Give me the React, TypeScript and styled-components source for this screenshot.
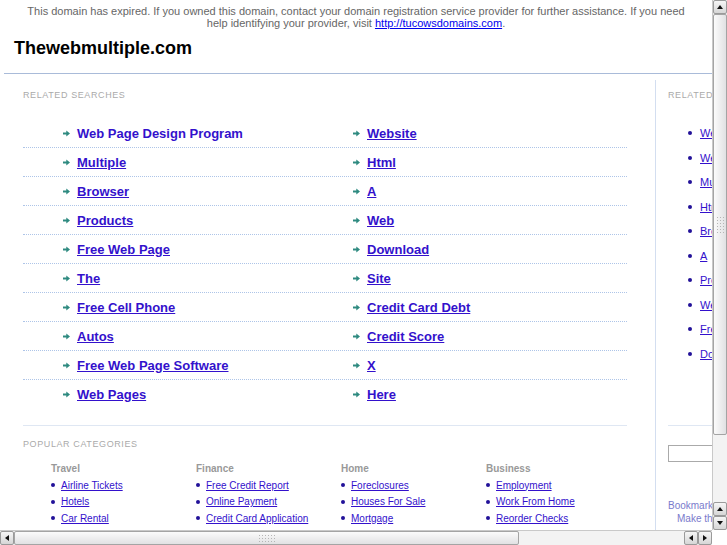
import * as React from "react";
import styled, { createGlobalStyle } from "styled-components";

const GlobalStyle = createGlobalStyle`
  html, body {
    margin: 0;
    padding: 0;
    background: #fff;
    overflow: hidden;
  }
  body {
    font-family: "Liberation Sans", Arial, Helvetica, sans-serif;
  }
`;

const searchRows: [string, string][] = [
  ["Web Page Design Program", "Website"],
  ["Multiple", "Html"],
  ["Browser", "A"],
  ["Products", "Web"],
  ["Free Web Page", "Download"],
  ["The", "Site"],
  ["Free Cell Phone", "Credit Card Debt"],
  ["Autos", "Credit Score"],
  ["Free Web Page Software", "X"],
  ["Web Pages", "Here"],
];

const categories = [
  { name: "Travel", links: ["Airline Tickets", "Hotels", "Car Rental"] },
  {
    name: "Finance",
    links: ["Free Credit Report", "Online Payment", "Credit Card Application"],
  },
  { name: "Home", links: ["Foreclosures", "Houses For Sale", "Mortgage"] },
  {
    name: "Business",
    links: ["Employment", "Work From Home", "Reorder Checks"],
  },
];

const sideLinks = searchRows.slice(0, 5).flatMap((r) => r);

const Frame = styled.div`
  width: 727px;
  height: 545px;
  display: grid;
  grid-template-columns: 712px 15px;
  grid-template-rows: 530px 15px;
  overflow: hidden;
`;

const Viewport = styled.div`
  overflow: hidden;
  background: #fff;
`;

const Page = styled.div`
  width: 945px;
`;

const Notice = styled.div`
  width: 712px;
  box-sizing: border-box;
  padding: 5px 10px 0;
  text-align: center;
  font-size: 11px;
  line-height: 12px;
  color: #666;

  a {
    color: #0000ee;
  }
`;

const Title = styled.h1`
  margin: 8px 0 0 14px;
  font-size: 18px;
  line-height: 22px;
  font-weight: bold;
  color: #000;
`;

const Rule = styled.hr`
  margin: 14px 0 0 4px;
  border: 0;
  border-top: 1px solid #a9bbd9;
`;

const Body = styled.div`
  display: flex;
  margin-top: 6px;
  min-height: 470px;
`;

const Main = styled.div`
  width: 651px;
  margin-left: 4px;
  box-sizing: border-box;
  padding: 10px 28px 0 19px;
`;

const Sidebar = styled.div`
  flex: 1;
  border-left: 1px solid #d3def0;
  padding: 10px 20px 0 12px;
`;

const Label = styled.div`
  font-size: 9px;
  line-height: 11px;
  letter-spacing: 0.6px;
  color: #aaa;
  text-transform: uppercase;
`;

const SearchList = styled.div`
  margin-top: 18px;
`;

const SearchRow = styled.div`
  display: grid;
  grid-template-columns: 290px 1fr;
  height: 28px;
  align-items: center;
  border-bottom: 1px dotted #aec5e8;

  &:last-child {
    border-bottom: none;
  }
`;

const SearchCell = styled.div`
  display: flex;
  align-items: center;
  gap: 7px;
  padding-left: 40px;
`;

const SearchLink = styled.a<{ $plain?: boolean }>`
  font-size: 13px;
  font-weight: bold;
  color: #3311cc;
  text-decoration: ${(p) => (p.$plain ? "none" : "underline")};
`;

const Divider = styled.div`
  margin-top: 17px;
  border-top: 1px solid #dfe7f3;
`;

const PopularLabel = styled(Label)`
  margin-top: 13px;
`;

const CategoryGrid = styled.div`
  display: grid;
  grid-template-columns: repeat(4, 145px);
  padding-left: 28px;
  margin-top: 13px;
`;

const CatHeading = styled.div`
  font-size: 10px;
  line-height: 12px;
  font-weight: bold;
  color: #999;
  margin-bottom: 2px;
`;

const CatItem = styled.div`
  display: flex;
  align-items: center;
  gap: 6px;
  height: 16.5px;
`;

const Bullet = styled.span`
  width: 4px;
  height: 4px;
  border-radius: 50%;
  background: #221199;
  flex: none;
`;

const SmallLink = styled.a`
  font-size: 10px;
  color: #3311cc;
  text-decoration: underline;
  white-space: nowrap;
`;

const SideList = styled.div`
  margin-top: 20px;
  padding-left: 20px;
`;

const SideItem = styled.div`
  display: flex;
  align-items: center;
  gap: 8px;
  height: 24.5px;
`;

const SideLink = styled(SmallLink)`
  font-size: 11px;
`;

const SideRule = styled.div`
  margin-top: 59px;
  border-top: 1px solid #dfe7f3;
`;

const SearchBox = styled.input`
  display: block;
  margin-top: 19px;
  width: 180px;
  height: 17px;
  box-sizing: border-box;
  border: 1px solid #aaa;
  padding: 0 3px;
`;

const SideNote = styled.div<{ $indent?: number }>`
  font-size: 10px;
  line-height: 13px;
  color: #7a7acc;
  padding-left: ${(p) => p.$indent ?? 0}px;
`;

const NoteBlock = styled.div`
  margin-top: 37px;
`;

/* fake GTK scrollbars */

const VScroll = styled.div`
  display: flex;
  flex-direction: column;
  background: #efefef;
  border-left: 1px solid #c9c9c9;
  box-sizing: border-box;
`;

const HScroll = styled.div`
  display: flex;
  background: #efefef;
  border-top: 1px solid #c9c9c9;
  box-sizing: border-box;
`;

const Corner = styled.div`
  background: #fff;
`;

type Dir = "up" | "down" | "left" | "right";

const ScrollButton = styled.div<{ $dir: Dir }>`
  flex: 0 0 14px;
  width: 14px;
  height: 14px;
  box-sizing: border-box;
  border: 1px solid #9a9a9a;
  border-radius: 2px;
  background: linear-gradient(#f6f6f6, #d6d6d6);
  display: flex;
  align-items: center;
  justify-content: center;

  &::after {
    content: "";
    width: 0;
    height: 0;
    border: 3px solid transparent;
    ${(p) =>
      p.$dir === "up"
        ? "border-bottom: 4px solid #111; border-top-width: 0;"
        : p.$dir === "down"
        ? "border-top: 4px solid #111; border-bottom-width: 0;"
        : p.$dir === "left"
        ? "border-right: 4px solid #111; border-left-width: 0;"
        : "border-left: 4px solid #111; border-right-width: 0;"}
  }
`;

const Thumb = styled.div<{ $size: number; $vertical?: boolean }>`
  flex: 0 0 ${(p) => p.$size}px;
  box-sizing: border-box;
  border: 1px solid #a4a4a4;
  border-radius: 2px;
  background: ${(p) =>
    p.$vertical
      ? "linear-gradient(to right, #fbfbfb, #e1e1e3)"
      : "linear-gradient(#fbfbfb, #e1e1e3)"};
  display: flex;
  align-items: center;
  justify-content: center;
`;

const Grip = styled.div<{ $vertical?: boolean }>`
  width: ${(p) => (p.$vertical ? 9 : 18)}px;
  height: ${(p) => (p.$vertical ? 18 : 9)}px;
  background-image: radial-gradient(#b5b5b5 0.8px, transparent 1px);
  background-size: 3px 3px;
`;

const Trough = styled.div`
  flex: 1;
  background-color: #f3f3f3;
  background-image: radial-gradient(#dcdcdc 0.5px, transparent 0.7px);
  background-size: 2px 2px;
`;

const Arrow = () => (
  <svg width="7" height="7" viewBox="0 0 7 7">
    <path d="M0 2.5h3.3V0.5L7 3.5 3.3 6.5V4.5H0z" fill="#2e8a80" />
  </svg>
);

const App = () => {
  return (
    <Frame>
      <GlobalStyle />
      <Viewport>
        <Page>
          <Notice>
            This domain has expired. If you owned this domain, contact your
            domain registration service provider for further assistance. If you
            need
            <br />
            help identifying your provider, visit{" "}
            <a href="#">http://tucowsdomains.com</a>.
          </Notice>
          <Title>Thewebmultiple.com</Title>
          <Rule />
          <Body>
            <Main>
              <Label>Related Searches</Label>
              <SearchList>
                {searchRows.map(([a, b], i) => (
                  <SearchRow key={a}>
                    <SearchCell>
                      <Arrow />
                      <SearchLink href="#" $plain={i === 0}>
                        {a}
                      </SearchLink>
                    </SearchCell>
                    <SearchCell>
                      <Arrow />
                      <SearchLink href="#">{b}</SearchLink>
                    </SearchCell>
                  </SearchRow>
                ))}
              </SearchList>
              <Divider />
              <PopularLabel>Popular Categories</PopularLabel>
              <CategoryGrid>
                {categories.map((c) => (
                  <div key={c.name}>
                    <CatHeading>{c.name}</CatHeading>
                    {c.links.map((l) => (
                      <CatItem key={l}>
                        <Bullet />
                        <SmallLink href="#">{l}</SmallLink>
                      </CatItem>
                    ))}
                  </div>
                ))}
              </CategoryGrid>
            </Main>
            <Sidebar>
              <Label>Related Searches</Label>
              <SideList>
                {sideLinks.map((l) => (
                  <SideItem key={l}>
                    <Bullet />
                    <SideLink href="#">{l}</SideLink>
                  </SideItem>
                ))}
              </SideList>
              <SideRule />
              <SearchBox type="text" />
              <NoteBlock>
                <SideNote>Bookmark this page</SideNote>
                <SideNote $indent={9}>Make this your homepage</SideNote>
              </NoteBlock>
            </Sidebar>
          </Body>
        </Page>
      </Viewport>
      <VScroll>
        <ScrollButton $dir="up" />
        <Thumb $size={421} $vertical>
          <Grip $vertical />
        </Thumb>
        <Trough />
        <ScrollButton $dir="up" />
        <ScrollButton $dir="down" />
      </VScroll>
      <HScroll>
        <ScrollButton $dir="left" />
        <Thumb $size={505}>
          <Grip />
        </Thumb>
        <Trough />
        <ScrollButton $dir="left" />
        <ScrollButton $dir="right" />
      </HScroll>
      <Corner />
    </Frame>
  );
};

export default App;
